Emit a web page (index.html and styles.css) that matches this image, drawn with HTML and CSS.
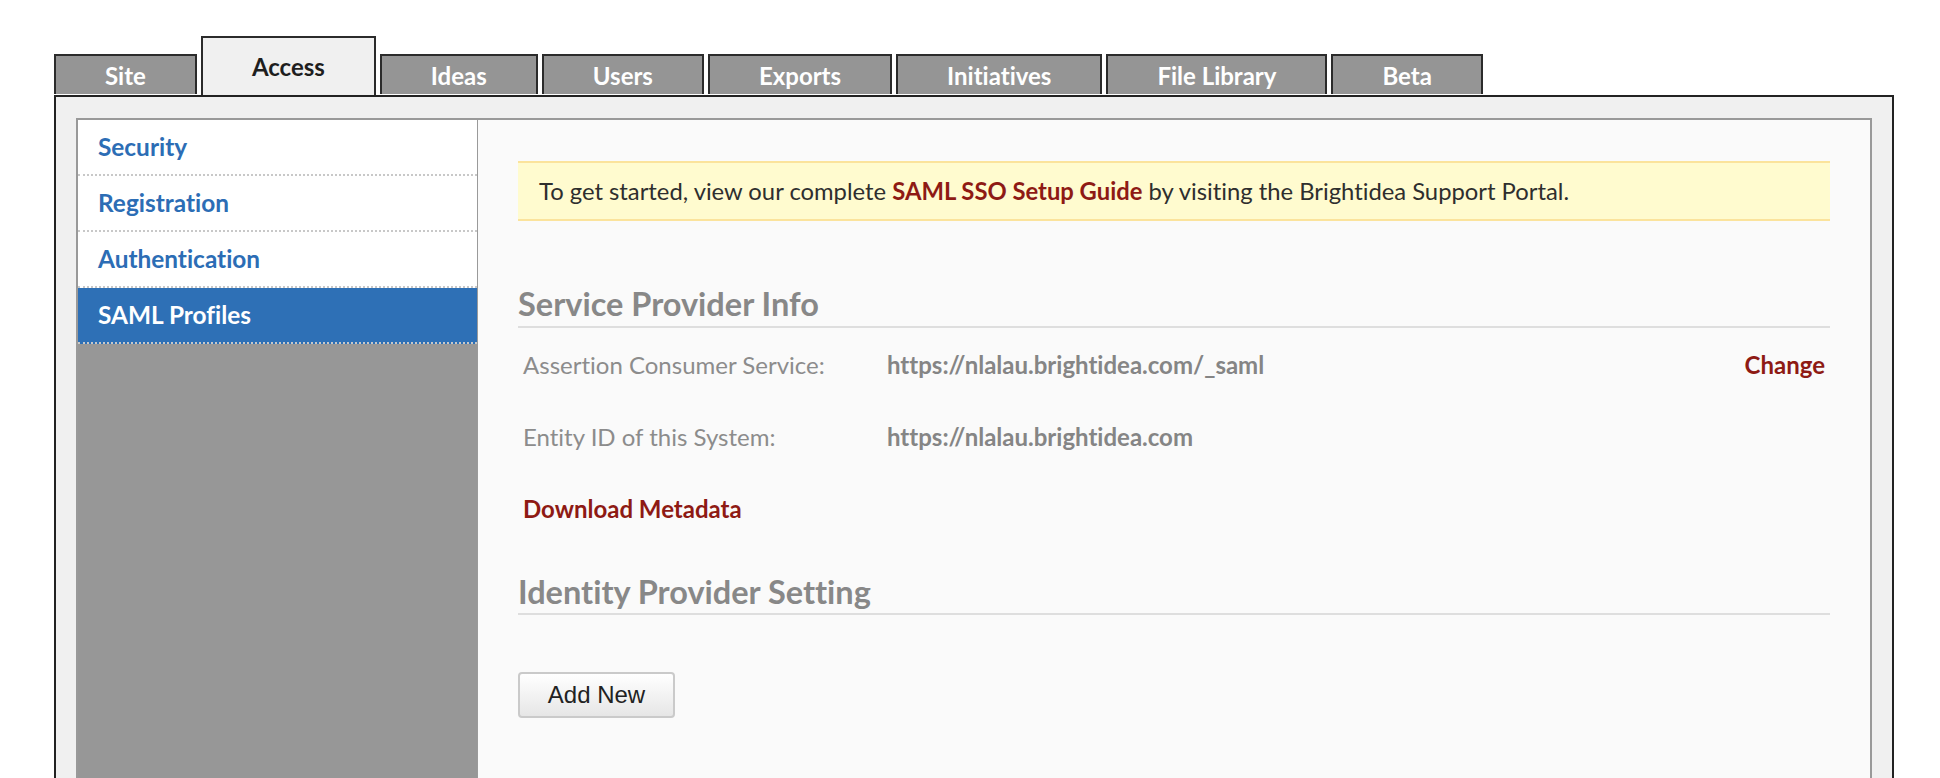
FILE: index.html
```html
<!DOCTYPE html>
<html>
<head>
<meta charset="utf-8">
<title>Access - SAML Profiles</title>
<link rel="stylesheet" href="styles.css">
</head>
<body>
<div class="page">
  <nav class="tabs">
    <a class="tab">Site</a>
    <a class="tab active">Access</a>
    <a class="tab">Ideas</a>
    <a class="tab">Users</a>
    <a class="tab">Exports</a>
    <a class="tab">Initiatives</a>
    <a class="tab">File Library</a>
    <a class="tab">Beta</a>
  </nav>
  <div class="container">
    <div class="panel">
      <aside class="sidebar">
        <a class="side-item">Security</a>
        <a class="side-item">Registration</a>
        <a class="side-item">Authentication</a>
        <a class="side-item selected">SAML Profiles</a>
      </aside>
      <main class="content">
        <div class="notice">To get started, view our complete <a class="red-link">SAML SSO Setup Guide</a> by visiting the Brightidea Support Portal.</div>
        <h2 class="section-title first">Service Provider Info</h2>
        <div class="row">
          <span class="label">Assertion Consumer Service:</span>
          <span class="value">https://nlalau.brightidea.com/_saml</span>
          <a class="red-link action">Change</a>
        </div>
        <div class="row">
          <span class="label">Entity ID of this System:</span>
          <span class="value">https://nlalau.brightidea.com</span>
        </div>
        <div class="row">
          <a class="red-link">Download Metadata</a>
        </div>
        <h2 class="section-title second">Identity Provider Setting</h2>
        <button class="btn">Add New</button>
      </main>
    </div>
  </div>
</div>
</body>
</html>
```

FILE: styles.css
```css
html, body {
  margin: 0;
  padding: 0;
  background: #ffffff;
  overflow: hidden;
}

body {
  font-family: Lato, "Open Sans", "Liberation Sans", sans-serif;
  font-variant-ligatures: none;
}

.page {
  padding: 36px 46px 0 54px;
}

.tabs {
  display: flex;
  align-items: flex-end;
  gap: 4px;
  height: 59px;
}

.tab {
  box-sizing: border-box;
  height: 40px;
  margin-bottom: 1px;
  padding: 0 49px;
  background: #959595;
  border: 2px solid #2b2b2b;
  border-bottom: none;
  color: #ffffff;
  font-weight: 700;
  font-size: 24px;
  line-height: 40px;
  white-space: nowrap;
}

.tab.active {
  height: 59px;
  margin-bottom: 0;
  padding: 1px 49px 0 49px;
  background: #f0f0f0;
  color: #1e1e1e;
  line-height: 56px;
}

.container {
  border: 2px solid #222222;
  background: #f0f0f0;
  padding: 21px 20px 0 20px;
}

.panel {
  display: flex;
  border: 2px solid #999999;
  height: 720px;
}

.sidebar {
  width: 399px;
  flex: none;
  background: #979797;
  border-right: 1px solid #9a9a9a;
  display: flex;
  flex-direction: column;
}

.side-item {
  display: block;
  height: 54px;
  line-height: 54px;
  padding-left: 20px;
  background: #ffffff;
  border-bottom: 2px dotted #c8c8c8;
  color: #2c6db5;
  font-weight: 700;
  font-size: 24.4px;
}

.side-item.selected {
  background: #2e70b6;
  color: #ffffff;
}

.content {
  flex: 1;
  background: #fafafa;
  padding: 41px 40px 0 40px;
}

.notice {
  box-sizing: border-box;
  height: 60px;
  line-height: 56px;
  padding-left: 21px;
  background: #fffbcf;
  border-top: 2px solid #fbe39c;
  border-bottom: 2px solid #fbe39c;
  color: #2e2e2e;
  font-size: 23.8px;
}

.red-link {
  color: #8e1a14;
  font-weight: 700;
}

.section-title {
  margin: 0;
  border-bottom: 2px solid #dedede;
  color: #888888;
  font-size: 32.5px;
  font-weight: 700;
  line-height: 34px;
}

.section-title.first {
  margin-top: 66px;
  padding-bottom: 5px;
}

.section-title.second {
  margin-top: 31px;
  padding-bottom: 4px;
}

.row {
  display: flex;
  align-items: center;
  height: 72px;
  padding: 0 5px;
  font-size: 24px;
}

.label {
  width: 364px;
  color: #8c8c8c;
}

.value {
  color: #858585;
  font-weight: 700;
}

.action {
  margin-left: auto;
}

.btn {
  display: block;
  margin-top: 57px;
  box-sizing: border-box;
  width: 157px;
  height: 46px;
  padding: 0;
  border: 2px solid #cacaca;
  border-radius: 4px;
  background: linear-gradient(#ffffff, #e6e6e6);
  color: #222222;
  font-family: "Liberation Sans", Arial, sans-serif;
  font-size: 24px;
}
```
